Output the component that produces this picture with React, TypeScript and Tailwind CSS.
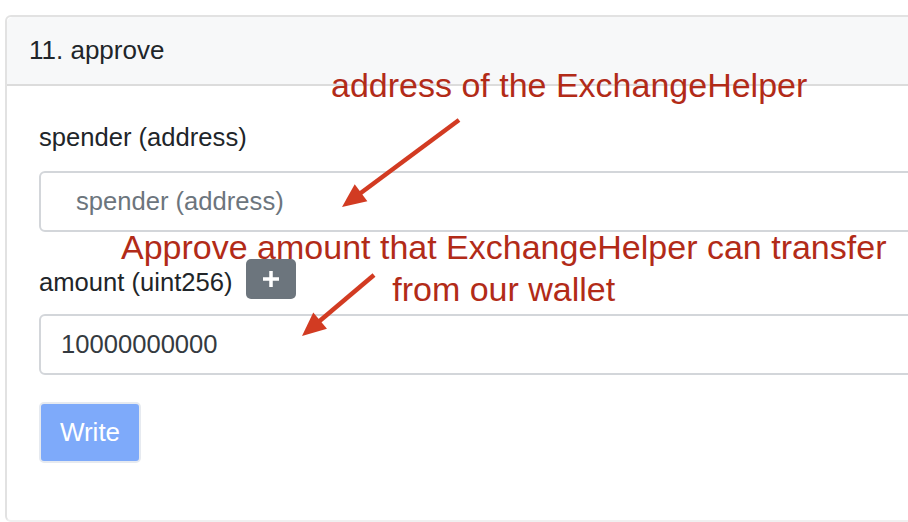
import React from "react";

const font = { fontFamily: '"Liberation Sans", Arial, sans-serif' };

const Arrow = ({ x1, y1, x2, y2 }: { x1: number; y1: number; x2: number; y2: number }) => {
  const ang = Math.atan2(y2 - y1, x2 - x1);
  const len = 26;
  const spread = 0.42;
  const bx = x2 - Math.cos(ang) * (len - 6);
  const by = y2 - Math.sin(ang) * (len - 6);
  const p1 = [x2 - Math.cos(ang - spread) * len, y2 - Math.sin(ang - spread) * len];
  const p2 = [x2 - Math.cos(ang + spread) * len, y2 - Math.sin(ang + spread) * len];
  return (
    <g>
      <line x1={x1} y1={y1} x2={bx} y2={by} stroke="#d23b22" strokeWidth={4.5} />
      <polygon points={`${x2},${y2} ${p1[0]},${p1[1]} ${p2[0]},${p2[1]}`} fill="#d23b22" />
    </g>
  );
};

export default function App() {
  return (
    <div className="relative w-[908px] h-[522px] bg-white overflow-hidden" style={font}>
      <div className="pt-[15px] pl-[5px]">
        <div className="w-[960px] h-[507px] border-2 border-[#e2e2e2] border-b-[#f0f0f0] rounded-[6px] bg-white">
          <div className="h-[69px] bg-[#f7f8f9] border-b-2 border-[#dcdcdc] flex items-center pl-[22px] text-[26px] text-[#212529] rounded-t-[6px]">
            11. approve
          </div>
          <div className="pl-[32px] pt-[37px]">
            <div className="text-[25.6px] text-[#212529] leading-[28px]">spender (address)</div>
            <div className="mt-[20px] h-[61px] border-2 border-[#d3d6da] rounded-[6px] flex items-center pl-[35px] text-[25.6px] text-[#6c757d]">
              spender (address)
            </div>
            <div className="mt-[27px] h-[40px] flex items-center gap-[13px]">
              <span className="text-[25.6px] text-[#212529] leading-[28px] pt-[6px]">amount (uint256)</span>
              <div className="w-[50px] h-[40px] rounded-[5px] bg-[#6c757d] flex items-center justify-center">
                <svg width="20" height="20" viewBox="0 0 20 20">
                  <path d="M10 2v16M2 10h16" stroke="white" strokeWidth="3.5" />
                </svg>
              </div>
            </div>
            <div className="mt-[15px] h-[61px] border-2 border-[#d3d6da] rounded-[6px] flex items-center pl-[20px] text-[25.6px] text-[#343a40]">
              10000000000
            </div>
            <div className="mt-[27px] w-[102px] h-[61px] rounded-[5px] bg-[#7eaafa] border-2 border-[#e6eaf0] flex items-center justify-center text-white text-[26px]">
              Write
            </div>
          </div>
        </div>
      </div>

      <div className="absolute left-[331px] top-[64px] text-[34px] text-[#b22b18] leading-[42px] whitespace-nowrap">
        address of the ExchangeHelper
      </div>
      <div className="absolute left-[121px] top-[226px] text-[34px] text-[#b22b18] leading-[42px] whitespace-nowrap text-center">
        Approve amount that ExchangeHelper can transfer
        <br />
        from our wallet
      </div>
      <svg className="absolute left-0 top-0" width="908" height="522">
        <Arrow x1={459} y1={120} x2={342} y2={207} />
        <Arrow x1={374} y1={275} x2={302} y2={336} />
      </svg>
    </div>
  );
}
